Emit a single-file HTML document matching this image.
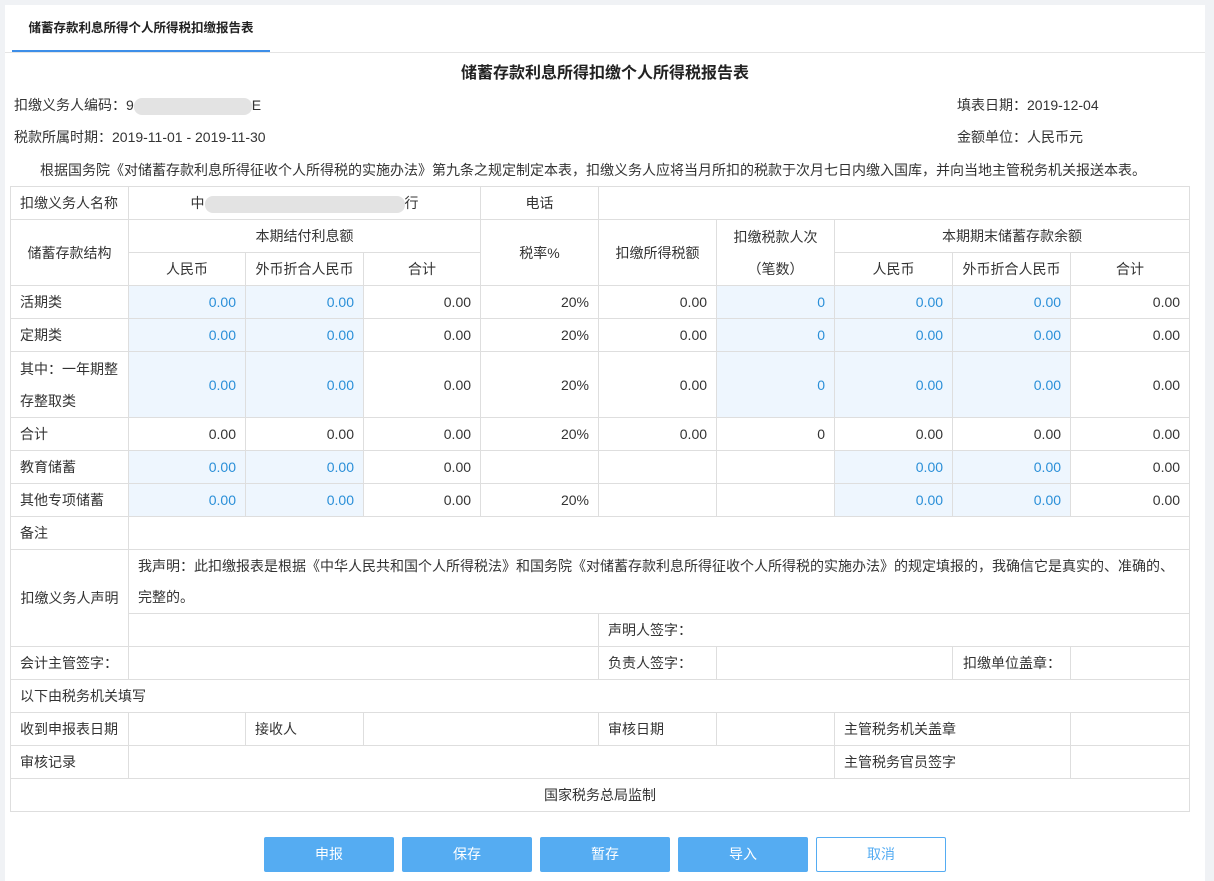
<!DOCTYPE html>
<html><head><meta charset="utf-8"><style>
*{box-sizing:border-box;margin:0;padding:0}
body{width:1214px;height:881px;background:#f0f2f5;font-family:"Liberation Sans","Noto Sans CJK SC",sans-serif;font-size:14px;color:#333;position:relative;overflow:hidden}
.panel{position:absolute;left:5px;top:5px;width:1200px;height:876px;background:#fff}
.tab{position:absolute;left:12px;top:5px;width:258px;height:48px;border-bottom:3px solid #3d8ee8;font-weight:bold;font-size:12.5px;line-height:46px;text-align:center;color:#222}
.tabline{position:absolute;left:5px;top:52px;width:1200px;height:1px;background:#e4e4e4}
.t{position:absolute;white-space:nowrap;line-height:18px}
.blur{display:inline-block;vertical-align:middle;background:#e3e3e3;border-radius:8px}
table{position:absolute;left:10px;top:186px;border-collapse:collapse;table-layout:fixed;width:1179px}
td{border:1px solid #dedede;height:33px;padding:0 9px;white-space:nowrap;overflow:hidden;line-height:20px}
.c{text-align:center}.r{text-align:right}
.b{background:#eef6fe;color:#2a8fd8;text-align:right}
.btn{position:absolute;top:837px;width:130px;height:35px;background:#55acf2;color:#fff;text-align:center;line-height:35px;font-size:14px;border-radius:2px}
</style></head><body>
<div class="panel"></div>
<div class="tab">储蓄存款利息所得个人所得税扣缴报告表</div>
<div class="tabline"></div>
<div class="t" style="left:0;width:1210px;text-align:center;top:65px;font-size:16px;font-weight:bold;color:#222">储蓄存款利息所得扣缴个人所得税报告表</div>
<div class="t" style="left:14px;top:96px">扣缴义务人编码：9<span class="blur" style="width:118px;height:17px"></span>E</div>
<div class="t" style="left:957px;top:96px">填表日期：2019-12-04</div>
<div class="t" style="left:14px;top:128px">税款所属时期：2019-11-01 - 2019-11-30</div>
<div class="t" style="left:957px;top:128px">金额单位：人民币元</div>
<div class="t" style="left:40px;top:161px">根据国务院《对储蓄存款利息所得征收个人所得税的实施办法》第九条之规定制定本表，扣缴义务人应将当月所扣的税款于次月七日内缴入国库，并向当地主管税务机关报送本表。</div>
<table>
<colgroup><col style="width:118px"><col style="width:117px"><col style="width:118px"><col style="width:117px"><col style="width:118px"><col style="width:118px"><col style="width:118px"><col style="width:118px"><col style="width:118px"><col style="width:119px"></colgroup>
<tr><td>扣缴义务人名称</td><td colspan="3" class="c">中<span class="blur" style="width:200px;height:17px"></span>行</td><td class="c">电话</td><td colspan="5"></td></tr>
<tr><td rowspan="2" class="c">储蓄存款结构</td><td colspan="3" class="c">本期结付利息额</td><td rowspan="2" class="c">税率%</td><td rowspan="2" class="c">扣缴所得税额</td><td rowspan="2" class="c" style="line-height:32px">扣缴税款人次<br>（笔数）</td><td colspan="3" class="c">本期期末储蓄存款余额</td></tr>
<tr><td class="c">人民币</td><td class="c">外币折合人民币</td><td class="c">合计</td><td class="c">人民币</td><td class="c">外币折合人民币</td><td class="c">合计</td></tr>
<tr><td>活期类</td><td class="b">0.00</td><td class="b">0.00</td><td class="r">0.00</td><td class="r">20%</td><td class="r">0.00</td><td class="b">0</td><td class="b">0.00</td><td class="b">0.00</td><td class="r">0.00</td></tr>
<tr><td>定期类</td><td class="b">0.00</td><td class="b">0.00</td><td class="r">0.00</td><td class="r">20%</td><td class="r">0.00</td><td class="b">0</td><td class="b">0.00</td><td class="b">0.00</td><td class="r">0.00</td></tr>
<tr><td style="height:66px;line-height:32px">其中：一年期整<br>存整取类</td><td class="b">0.00</td><td class="b">0.00</td><td class="r">0.00</td><td class="r">20%</td><td class="r">0.00</td><td class="b">0</td><td class="b">0.00</td><td class="b">0.00</td><td class="r">0.00</td></tr>
<tr><td>合计</td><td class="r">0.00</td><td class="r">0.00</td><td class="r">0.00</td><td class="r">20%</td><td class="r">0.00</td><td class="r">0</td><td class="r">0.00</td><td class="r">0.00</td><td class="r">0.00</td></tr>
<tr><td>教育储蓄</td><td class="b">0.00</td><td class="b">0.00</td><td class="r">0.00</td><td></td><td></td><td></td><td class="b">0.00</td><td class="b">0.00</td><td class="r">0.00</td></tr>
<tr><td>其他专项储蓄</td><td class="b">0.00</td><td class="b">0.00</td><td class="r">0.00</td><td class="r">20%</td><td></td><td></td><td class="b">0.00</td><td class="b">0.00</td><td class="r">0.00</td></tr>
<tr><td>备注</td><td colspan="9"></td></tr>
<tr><td rowspan="2" class="c">扣缴义务人声明</td><td colspan="9" style="height:64px;line-height:31px;white-space:normal">我声明：此扣缴报表是根据《中华人民共和国个人所得税法》和国务院《对储蓄存款利息所得征收个人所得税的实施办法》的规定填报的，我确信它是真实的、准确的、完整的。</td></tr>
<tr><td colspan="4"></td><td colspan="5">声明人签字：</td></tr>
<tr><td>会计主管签字：</td><td colspan="4"></td><td>负责人签字：</td><td colspan="2"></td><td class="r">扣缴单位盖章：</td><td></td></tr>
<tr><td colspan="10">以下由税务机关填写</td></tr>
<tr><td>收到申报表日期</td><td></td><td>接收人</td><td colspan="2"></td><td>审核日期</td><td></td><td colspan="2">主管税务机关盖章</td><td></td></tr>
<tr><td>审核记录</td><td colspan="6"></td><td colspan="2">主管税务官员签字</td><td></td></tr>
<tr><td colspan="10" class="c">国家税务总局监制</td></tr>
</table>
<div class="btn" style="left:264px">申报</div>
<div class="btn" style="left:402px">保存</div>
<div class="btn" style="left:540px">暂存</div>
<div class="btn" style="left:678px">导入</div>
<div class="btn" style="left:816px;background:#fff;border:1px solid #55acf2;color:#55acf2;line-height:33px">取消</div>
</body></html>
